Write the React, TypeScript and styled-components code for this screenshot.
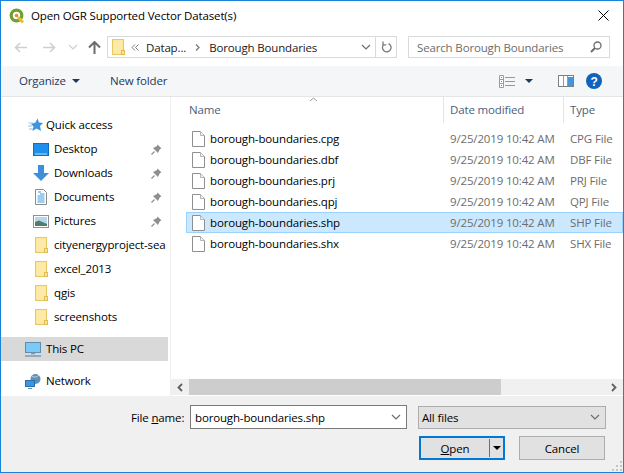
import React from "react"
import styled, { createGlobalStyle } from "styled-components"

const Global = createGlobalStyle`
    html, body { margin: 0; padding: 0; background: #fff; }
    * { box-sizing: border-box; }
`

const Window = styled.div`
    width: 624px;
    height: 473px;
    border: 1px solid #1883d7;
    background: #fff;
    display: flex;
    flex-direction: column;
    font-family: "Open Sans", "Noto Sans", sans-serif;
    font-size: 11.5px;
    letter-spacing: -0.15px;
    color: #000;
    overflow: hidden;
`

const TitleBar = styled.div`
    height: 29px;
    display: flex;
    align-items: center;
    padding: 0 14px 0 8px;
    gap: 6px;
    flex-shrink: 0;
`
const TitleText = styled.div`
    flex: 1;
`

const NavBar = styled.div`
    height: 36px;
    display: flex;
    align-items: center;
    padding: 0 12px 2px 13px;
    flex-shrink: 0;
`
const NavIcons = styled.div`
    width: 93px;
    display: flex;
    align-items: center;
`
const NavIcon = styled.div<{ $l: number }>`
    margin-left: ${(p) => p.$l}px;
    display: flex;
`
const AddressBox = styled.div`
    width: 290px;
    height: 22px;
    border: 1px solid #d9d9d9;
    display: flex;
    align-items: center;
    padding-left: 4px;
    color: #1a1a1a;
`
const Crumb = styled.span<{ $l: number }>`
    margin-left: ${(p) => p.$l}px;
    white-space: nowrap;
    display: flex;
`
const AddressGrow = styled.div`
    flex: 1;
`
const RefreshCell = styled.div`
    width: 21px;
    height: 100%;
    border-left: 1px solid #d9d9d9;
    display: flex;
    align-items: center;
    justify-content: center;
`
const SearchBox = styled.div`
    width: 202px;
    height: 22px;
    margin-left: 11px;
    border: 1px solid #d9d9d9;
    display: flex;
    align-items: center;
    justify-content: space-between;
    padding: 0 7px 0 8px;
    color: #6d6d6d;
`

const Toolbar = styled.div`
    height: 31px;
    background: #f5f6f7;
    border-bottom: 1px solid #e5e5e5;
    display: flex;
    align-items: center;
    padding: 0 21px 0 18px;
    color: #1e395b;
    flex-shrink: 0;
`
const ToolLabel = styled.span<{ $l?: number }>`
    margin-left: ${(p) => p.$l ?? 0}px;
    padding-bottom: 2px;
`
const ToolSpacer = styled.div`
    flex: 1;
`
const Caret = styled.div<{ $l: number }>`
    width: 0;
    height: 0;
    margin-left: ${(p) => p.$l}px;
    border-left: 4px solid transparent;
    border-right: 4px solid transparent;
    border-top: 4px solid #1e395b;
`
const ToolIcon = styled.div<{ $l: number }>`
    margin-left: ${(p) => p.$l}px;
    display: flex;
`

const Body = styled.div`
    flex: 1;
    display: flex;
    min-height: 0;
`
const Sidebar = styled.div`
    width: 170px;
    border-right: 1px solid #f0f0f0;
    padding: 16px 0 0 0;
    flex-shrink: 0;
`
const NavRow = styled.div<{ $indent: number; $active?: boolean; $gap?: number }>`
    width: 167px;
    height: 24px;
    margin-top: ${(p) => p.$gap ?? 0}px;
    padding-left: ${(p) => p.$indent}px;
    padding-right: 6px;
    display: flex;
    align-items: center;
    background: ${(p) => (p.$active ? "#d9d9d9" : "transparent")};
    color: #000;
    white-space: nowrap;
`
const NavIconBox = styled.div<{ $w: number }>`
    width: ${(p) => p.$w}px;
    display: flex;
    flex-shrink: 0;
`
const NavLabel = styled.span`
    flex: 1;
    padding-bottom: 2px;
`

const Content = styled.div`
    flex: 1;
    min-width: 0;
    display: flex;
    flex-direction: column;
    position: relative;
`
const SortArrow = styled.svg`
    position: absolute;
    left: 138px;
    top: 0;
`
const Header = styled.div`
    height: 26px;
    display: flex;
    color: #4c607a;
    flex-shrink: 0;
`
const HeaderCell = styled.div<{ $w: number; $sep?: boolean; $pad?: number }>`
    width: ${(p) => p.$w}px;
    padding-left: ${(p) => p.$pad ?? 6}px;
    padding-top: 5px;
    border-left: ${(p) => (p.$sep ? "1px solid #e5e5e5" : "none")};
    flex-shrink: 0;
`
const Rows = styled.div`
    flex: 1;
    padding: 5px 0 0 15px;
`
const Row = styled.div<{ $selected?: boolean }>`
    height: 21px;
    display: flex;
    align-items: center;
    border: 1px solid ${(p) => (p.$selected ? "#99d1ff" : "transparent")};
    background: ${(p) => (p.$selected ? "#cce8ff" : "transparent")};
    white-space: nowrap;
`
const Cell = styled.div<{ $w: number; $muted?: boolean }>`
    width: ${(p) => p.$w}px;
    color: ${(p) => (p.$muted ? "#6d6d6d" : "#000")};
    flex-shrink: 0;
    display: flex;
    align-items: center;
`
const FileIconBox = styled.div`
    width: 23px;
    padding-left: 5px;
    display: flex;
    flex-shrink: 0;
`

const HScroll = styled.div`
    height: 16px;
    margin-bottom: 1px;
    background: #f0f0f0;
    display: flex;
    align-items: center;
    flex-shrink: 0;
`
const ScrollBtn = styled.div<{ $w: number }>`
    width: ${(p) => p.$w}px;
    height: 100%;
    display: flex;
    align-items: center;
    justify-content: center;
    flex-shrink: 0;
`
const ScrollThumb = styled.div`
    width: 312px;
    height: 100%;
    background: #cdcdcd;
`
const ScrollTrack = styled.div`
    flex: 1;
`

const Footer = styled.div`
    height: 76px;
    background: #f0f0f0;
    flex-shrink: 0;
    position: relative;
    padding: 9px 0 0 130px;
`
const FooterRow = styled.div`
    display: flex;
    align-items: center;
`
const FileLabel = styled.div`
    width: 59px;
    white-space: nowrap;
    u { text-decoration: underline; }
`
const NameInput = styled.div`
    width: 217px;
    height: 24px;
    background: #fff;
    border: 1px solid #7a7a7a;
    display: flex;
    align-items: center;
    justify-content: space-between;
    padding: 0 5px 0 4px;
`
const TypeSelect = styled.div`
    width: 188px;
    height: 23px;
    margin-left: 11px;
    background: #e1e1e1;
    border: 1px solid #adadad;
    display: flex;
    align-items: center;
    justify-content: space-between;
    padding: 0 5px 0 3px;
`
const Buttons = styled.div`
    display: flex;
    margin: 7px 0 0 288px;
    gap: 14px;
`
const OpenButton = styled.div`
    width: 86px;
    height: 24px;
    background: #e1e1e1;
    border: 2px solid #0078d7;
    display: flex;
    align-items: center;
    u { text-decoration: underline; }
`
const OpenLabel = styled.div`
    flex: 1;
    text-align: center;
`
const SplitPart = styled.div`
    width: 14px;
    height: 18px;
    border-left: 1px solid #6f6f6f;
    display: flex;
    align-items: center;
    justify-content: center;
`
const SplitCaret = styled.div`
    width: 0;
    height: 0;
    border-left: 4px solid transparent;
    border-right: 4px solid transparent;
    border-top: 4px solid #000;
`
const CancelButton = styled.div`
    width: 86px;
    height: 24px;
    background: #e1e1e1;
    border: 1px solid #adadad;
    display: flex;
    align-items: center;
    justify-content: center;
`
const Grip = styled.svg`
    position: absolute;
    right: 1px;
    bottom: 1px;
`

const Folder = () => (
    <svg width="13" height="16" viewBox="0 0 13 16">
        <rect x="0.5" y="0.5" width="11" height="15" fill="#fde58f" stroke="#e8c860" />
        <rect x="1.5" y="1.5" width="9" height="13" fill="#fdeaa8" />
        <rect x="9.5" y="11.5" width="3" height="4" fill="#fde58f" stroke="#e2bb4c" />
    </svg>
)

const FileIcon = () => (
    <svg width="13" height="16" viewBox="0 0 13 16">
        <path d="M0.5 0.5H8.5L12.5 4.5V15.5H0.5Z" fill="#fff" stroke="#8f8f8f" />
        <path d="M8.5 0.5V4.5H12.5" fill="#f2f2f2" stroke="#b5b5b5" />
    </svg>
)

const Chevron = ({ color = "#6d6d6d" }: { color?: string }) => (
    <svg width="10" height="6" viewBox="0 0 10 6">
        <path d="M1 1L5 5L9 1" fill="none" stroke={color} strokeWidth="1.2" />
    </svg>
)

const Pin = () => (
    <svg width="11" height="11" viewBox="0 0 11 11">
        <path d="M6.5 0.5L10.5 4.5L9 5L7.5 7.8L7 9L2 4L3.2 3.5L6 2Z" fill="#8a8f94" />
        <path d="M3.5 7.5L0.5 10.5" stroke="#8a8f94" strokeWidth="1.2" />
    </svg>
)

const sideItems = [
    { name: "Desktop", pin: true, icon: (
        <svg width="16" height="13" viewBox="0 0 16 13">
            <rect x="0" y="0" width="16" height="13" fill="#1e8fea" />
            <rect x="0.5" y="0.5" width="15" height="12" fill="none" stroke="#0f6fbf" />
            <rect x="2" y="10.5" width="12" height="1" fill="#b5defa" />
        </svg>
    ) },
    { name: "Downloads", pin: true, icon: (
        <svg width="16" height="16" viewBox="0 0 16 16">
            <path d="M5 0H11V8H16L8 16L0 8H5Z" fill="#3d8fdc" />
        </svg>
    ) },
    { name: "Documents", pin: true, icon: (
        <svg width="16" height="16" viewBox="0 0 16 16">
            <path d="M2.5 0.5H10.5L13.5 3.5V15.5H2.5Z" fill="#fff" stroke="#8a8a8a" />
            <path d="M4.5 7H11.5M4.5 9H11.5M4.5 11H11.5M4.5 13H11.5M7 5H11.5M5 3H8" stroke="#3c9ae0" />
        </svg>
    ) },
    { name: "Pictures", pin: true, icon: (
        <svg width="16" height="13" viewBox="0 0 16 13">
            <rect x="0.5" y="0.5" width="15" height="12" fill="#fff" stroke="#8f8f8f" />
            <rect x="2" y="2" width="12" height="9" fill="#b9d7ec" />
            <path d="M2 7L6 5.5L14 9V11H2Z" fill="#4f7d6a" />
        </svg>
    ) },
    { name: "cityenergyproject-sea", icon: <Folder /> },
    { name: "excel_2013", icon: <Folder /> },
    { name: "qgis", icon: <Folder /> },
    { name: "screenshots", icon: <Folder /> },
]

const files = [
    { ext: "cpg", type: "CPG File" },
    { ext: "dbf", type: "DBF File" },
    { ext: "prj", type: "PRJ File" },
    { ext: "qpj", type: "QPJ File" },
    { ext: "shp", type: "SHP File", selected: true },
    { ext: "shx", type: "SHX File" },
]

const App: React.FC = () => {
    return (
        <Window>
            <Global />
            <TitleBar>
                <svg width="16" height="16" viewBox="0 0 16 16">
                    <circle cx="7.5" cy="7.5" r="5.3" fill="#fff" stroke="#6f9f2e" strokeWidth="3.2" />
                    <path d="M9 9L14 14.5" stroke="#e9bd35" strokeWidth="3" />
                    <circle cx="7.5" cy="7.5" r="1.8" fill="#e08a3c" />
                </svg>
                <TitleText>Open OGR Supported Vector Dataset(s)</TitleText>
                <svg width="11" height="11" viewBox="0 0 11 11">
                    <path d="M0.5 0.5L10.5 10.5M10.5 0.5L0.5 10.5" stroke="#000" strokeWidth="1" />
                </svg>
            </TitleBar>
            <NavBar>
                <NavIcons>
                    <NavIcon $l={0}>
                        <svg width="13" height="11" viewBox="0 0 13 11"><path d="M6 1L1.5 5.5L6 10M2 5.5H13" fill="none" stroke="#cfcfcf" strokeWidth="1.6" /></svg>
                    </NavIcon>
                    <NavIcon $l={16}>
                        <svg width="13" height="11" viewBox="0 0 13 11"><path d="M7 1L11.5 5.5L7 10M11 5.5H0" fill="none" stroke="#cfcfcf" strokeWidth="1.6" /></svg>
                    </NavIcon>
                    <NavIcon $l={12}><Chevron color="#cfcfcf" /></NavIcon>
                    <NavIcon $l={10}>
                        <svg width="13" height="13" viewBox="0 0 13 13"><path d="M1 6.5L6.5 1L12 6.5M6.5 1.5V13" fill="none" stroke="#6d6d6d" strokeWidth="2" /></svg>
                    </NavIcon>
                </NavIcons>
                <AddressBox>
                    <Folder />
                    <Crumb $l={6}>
                        <svg width="8" height="7" viewBox="0 0 8 7"><path d="M4 0.5L1 3.5L4 6.5M7.5 0.5L4.5 3.5L7.5 6.5" fill="none" stroke="#7a7a7a" /></svg>
                    </Crumb>
                    <Crumb $l={7}>Datap...</Crumb>
                    <Crumb $l={9}>
                        <svg width="5" height="7" viewBox="0 0 5 7"><path d="M1 0.5L4 3.5L1 6.5" fill="none" stroke="#7a7a7a" strokeWidth="1.3" /></svg>
                    </Crumb>
                    <Crumb $l={9}>Borough Boundaries</Crumb>
                    <AddressGrow />
                    <Chevron />
                    <Crumb $l={4} />
                    <RefreshCell>
                        <svg width="11" height="12" viewBox="0 0 11 12"><path d="M7.5 2.6A4.3 4.3 0 1 1 2.6 3.6M2 0.5V3.8H5.3" fill="none" stroke="#7a7a7a" strokeWidth="1.3" /></svg>
                    </RefreshCell>
                </AddressBox>
                <SearchBox>
                    <span>Search Borough Boundaries</span>
                    <svg width="12" height="12" viewBox="0 0 12 12"><circle cx="7.5" cy="4.5" r="3.5" fill="none" stroke="#6d6d6d" strokeWidth="1.3" /><path d="M5 7L1 11" stroke="#6d6d6d" strokeWidth="2" /></svg>
                </SearchBox>
            </NavBar>
            <Toolbar>
                <ToolLabel>Organize</ToolLabel>
                <Caret $l={6} />
                <ToolLabel $l={30}>New folder</ToolLabel>
                <ToolSpacer />
                <ToolIcon $l={0}>
                    <svg width="17" height="13" viewBox="0 0 17 13">
                        <path d="M0.5 0.5H4.5V12.5H0.5ZM0.5 4.5H4.5M0.5 8.5H4.5" fill="#fff" stroke="#9a9a9a" />
                        <rect x="2" y="2" width="1" height="1" fill="#3f8fd8" />
                        <rect x="2" y="6" width="1" height="1" fill="#3f8fd8" />
                        <rect x="2" y="10" width="1" height="1" fill="#d0483c" />
                        <path d="M6 2.5H16M6 6.5H16M6 10.5H16" stroke="#8f9aa6" />
                    </svg>
                </ToolIcon>
                <Caret $l={9} />
                <ToolIcon $l={25}>
                    <svg width="16" height="12" viewBox="0 0 16 12">
                        <rect x="0.5" y="0.5" width="15" height="11" fill="#fff" stroke="#7f7f7f" />
                        <path d="M0 0.5H16M0 11.5H16" stroke="#7f7f7f" />
                        <rect x="10" y="2" width="5" height="9" fill="#3f97e0" />
                        <path d="M5.5 1V11M9.5 1V11" stroke="#9a9a9a" />
                    </svg>
                </ToolIcon>
                <ToolIcon $l={12}>
                    <svg width="16" height="16" viewBox="0 0 16 16">
                        <circle cx="8" cy="8" r="8" fill="#0f62bd" />
                        <text x="8" y="12.5" textAnchor="middle" fontFamily="'Liberation Sans', sans-serif" fontSize="12" fontWeight="700" fill="#fff">?</text>
                    </svg>
                </ToolIcon>
            </Toolbar>
            <Body>
                <Sidebar>
                    <NavRow $indent={27}>
                        <NavIconBox $w={18}>
                            <svg width="15" height="14" viewBox="0 0 15 14">
                                <path d="M9.5 0.5L11 4.5L15 5L12 8L13 13L8.5 10.5L4.5 13L5.5 8.5L3 6L7.5 4.5Z" fill="#3d94e0" />
                                <path d="M0.5 5H5M0 8H4M1 11H5" stroke="#8cc3ef" />
                            </svg>
                        </NavIconBox>
                        <NavLabel>Quick access</NavLabel>
                    </NavRow>
                    {sideItems.map((item) => (
                        <NavRow key={item.name} $indent={item.pin ? 32 : 34}>
                            <NavIconBox $w={item.pin ? 21 : 19}>{item.icon}</NavIconBox>
                            <NavLabel>{item.name}</NavLabel>
                            {item.pin && <Pin />}
                        </NavRow>
                    ))}
                    <NavRow $indent={24} $active $gap={8}>
                        <NavIconBox $w={21}>
                            <svg width="16" height="15" viewBox="0 0 16 15">
                                <rect x="0.5" y="0.5" width="15" height="10" fill="#7cc8f7" stroke="#5d8fb0" />
                                <path d="M6 11.5H10M0 14H16" stroke="#7a9cb5" strokeWidth="1.5" />
                            </svg>
                        </NavIconBox>
                        <NavLabel>This PC</NavLabel>
                    </NavRow>
                    <NavRow $indent={24} $gap={8}>
                        <NavIconBox $w={21}>
                            <svg width="16" height="15" viewBox="0 0 16 15">
                                <circle cx="10.5" cy="5" r="5" fill="#5f90b8" />
                                <path d="M7 2C9 4 12 3 14 1" stroke="#c9dcea" fill="none" />
                                <rect x="0.5" y="6.5" width="9" height="6" fill="#3d94e0" stroke="#2f6fa8" />
                                <path d="M3 14.5H7" stroke="#5d8fb0" />
                            </svg>
                        </NavIconBox>
                        <NavLabel>Network</NavLabel>
                    </NavRow>
                </Sidebar>
                <Content>
                    <SortArrow width="9" height="5" viewBox="0 0 9 5"><path d="M1 4L4.5 1L8 4" fill="none" stroke="#9a9a9a" /></SortArrow>
                    <Header>
                        <HeaderCell $w={272} $pad={18}>Name</HeaderCell>
                        <HeaderCell $w={120} $sep>Date modified</HeaderCell>
                        <HeaderCell $w={60} $sep>Type</HeaderCell>
                    </Header>
                    <Rows>
                        {files.map((f) => (
                            <Row key={f.ext} $selected={f.selected}>
                                <FileIconBox><FileIcon /></FileIconBox>
                                <Cell $w={240}>borough-boundaries.{f.ext}</Cell>
                                <Cell $w={120} $muted>9/25/2019 10:42 AM</Cell>
                                <Cell $w={53} $muted>{f.type}</Cell>
                            </Row>
                        ))}
                    </Rows>
                    <HScroll>
                        <ScrollBtn $w={18}>
                            <svg width="6" height="9" viewBox="0 0 6 9"><path d="M5 1L1.5 4.5L5 8" fill="none" stroke="#606060" strokeWidth="1.8" /></svg>
                        </ScrollBtn>
                        <ScrollThumb />
                        <ScrollTrack />
                        <ScrollBtn $w={19}>
                            <svg width="6" height="9" viewBox="0 0 6 9"><path d="M1 1L4.5 4.5L1 8" fill="none" stroke="#606060" strokeWidth="1.8" /></svg>
                        </ScrollBtn>
                    </HScroll>
                </Content>
            </Body>
            <Footer>
                <FooterRow>
                    <FileLabel>File <u>n</u>ame:</FileLabel>
                    <NameInput>
                        <span>borough-boundaries.shp</span>
                        <Chevron />
                    </NameInput>
                    <TypeSelect>
                        <span>All files</span>
                        <Chevron />
                    </TypeSelect>
                </FooterRow>
                <Buttons>
                    <OpenButton>
                        <OpenLabel><u>O</u>pen</OpenLabel>
                        <SplitPart><SplitCaret /></SplitPart>
                    </OpenButton>
                    <CancelButton>Cancel</CancelButton>
                </Buttons>
                <Grip width="10" height="10" viewBox="0 0 10 10">
                    <path d="M8 0h2v2H8zM4 4h2v2H4zM8 4h2v2H8zM0 8h2v2H0zM4 8h2v2H4zM8 8h2v2H8z" fill="#c4c4c4" />
                </Grip>
            </Footer>
        </Window>
    )
}

export default App
